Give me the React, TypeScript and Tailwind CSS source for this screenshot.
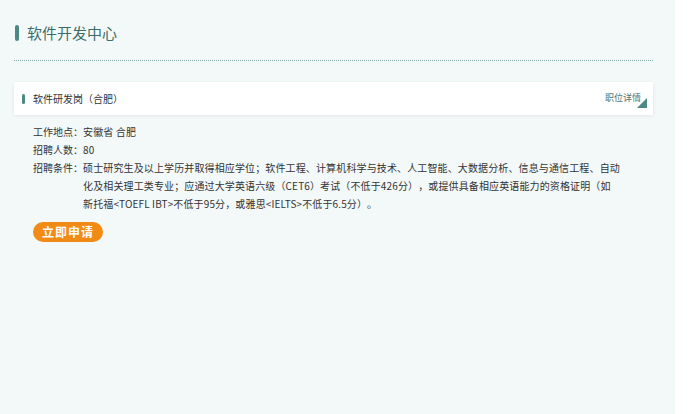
export default function App() {
  const rows = [
    { label: "工作地点：", lines: ["安徽省 合肥"] },
    { label: "招聘人数：", lines: ["80"] },
    {
      label: "招聘条件：",
      lines: [
        "硕士研究生及以上学历并取得相应学位；软件工程、计算机科学与技术、人工智能、大数据分析、信息与通信工程、自动",
        "化及相关理工类专业；应通过大学英语六级（CET6）考试（不低于426分），或提供具备相应英语能力的资格证明（如",
        "新托福<TOEFL IBT>不低于95分，或雅思<IELTS>不低于6.5分）。",
      ],
    },
  ];

  return (
    <div
      className="min-h-[414px] w-full bg-white [text-spacing-trim:space-all]"
      style={{ fontFamily: '"Noto Sans CJK SC", "Noto Sans", sans-serif' }}
    >
      <div className="min-h-[414px] w-[675px] bg-[#f3f9f9] pl-[14px] pr-[22px] pt-[24px]">
        {/* Section title */}
        <div className="flex items-center gap-[8px] pl-px">
          <span className="h-[16px] w-[4px] rounded-full bg-[#4b8a84]" />
          <h1 className="text-[15px] leading-[18px] text-[#3d6d69]">软件开发中心</h1>
        </div>
        <div className="mt-[18px] border-t border-dotted border-[#7ea6a3]" />

        {/* Job card */}
        <div className="relative mt-[21px] flex h-[33px] items-center justify-between bg-white pl-[8px] pr-[12px] shadow-[0_1px_4px_rgba(0,0,0,0.08)]">
          <div className="flex items-center gap-[8px]">
            <span className="h-[10px] w-[3px] rounded-full bg-[#4b8a84]" />
            <span className="text-[10px] text-[#333]">软件研发岗（合肥）</span>
          </div>
          <span className="-mt-px text-[9px] text-[#4f7572]">职位详情</span>
          <span className="absolute bottom-[7px] right-[6px] h-0 w-0 border-b-[10px] border-l-[10px] border-b-[#4b8a84] border-l-transparent" />
        </div>

        {/* Details */}
        <div className="mt-[8px] pl-[19px] text-[10px] leading-[18px] text-[#333]">
          {rows.map((r) => (
            <div key={r.label} className="flex">
              <span className="w-[50px] shrink-0">{r.label}</span>
              <div className="w-[560px] tracking-[0.13px]">
                {r.lines.map((l) => (
                  <div key={l} className="whitespace-nowrap">{l}</div>
                ))}
              </div>
            </div>
          ))}
          <button className="mt-[9px] h-[20px] w-[70px] rounded-full bg-[#f28b16] text-[12px] font-bold tracking-[1px] text-white">
            立即申请
          </button>
        </div>
      </div>
    </div>
  );
}
